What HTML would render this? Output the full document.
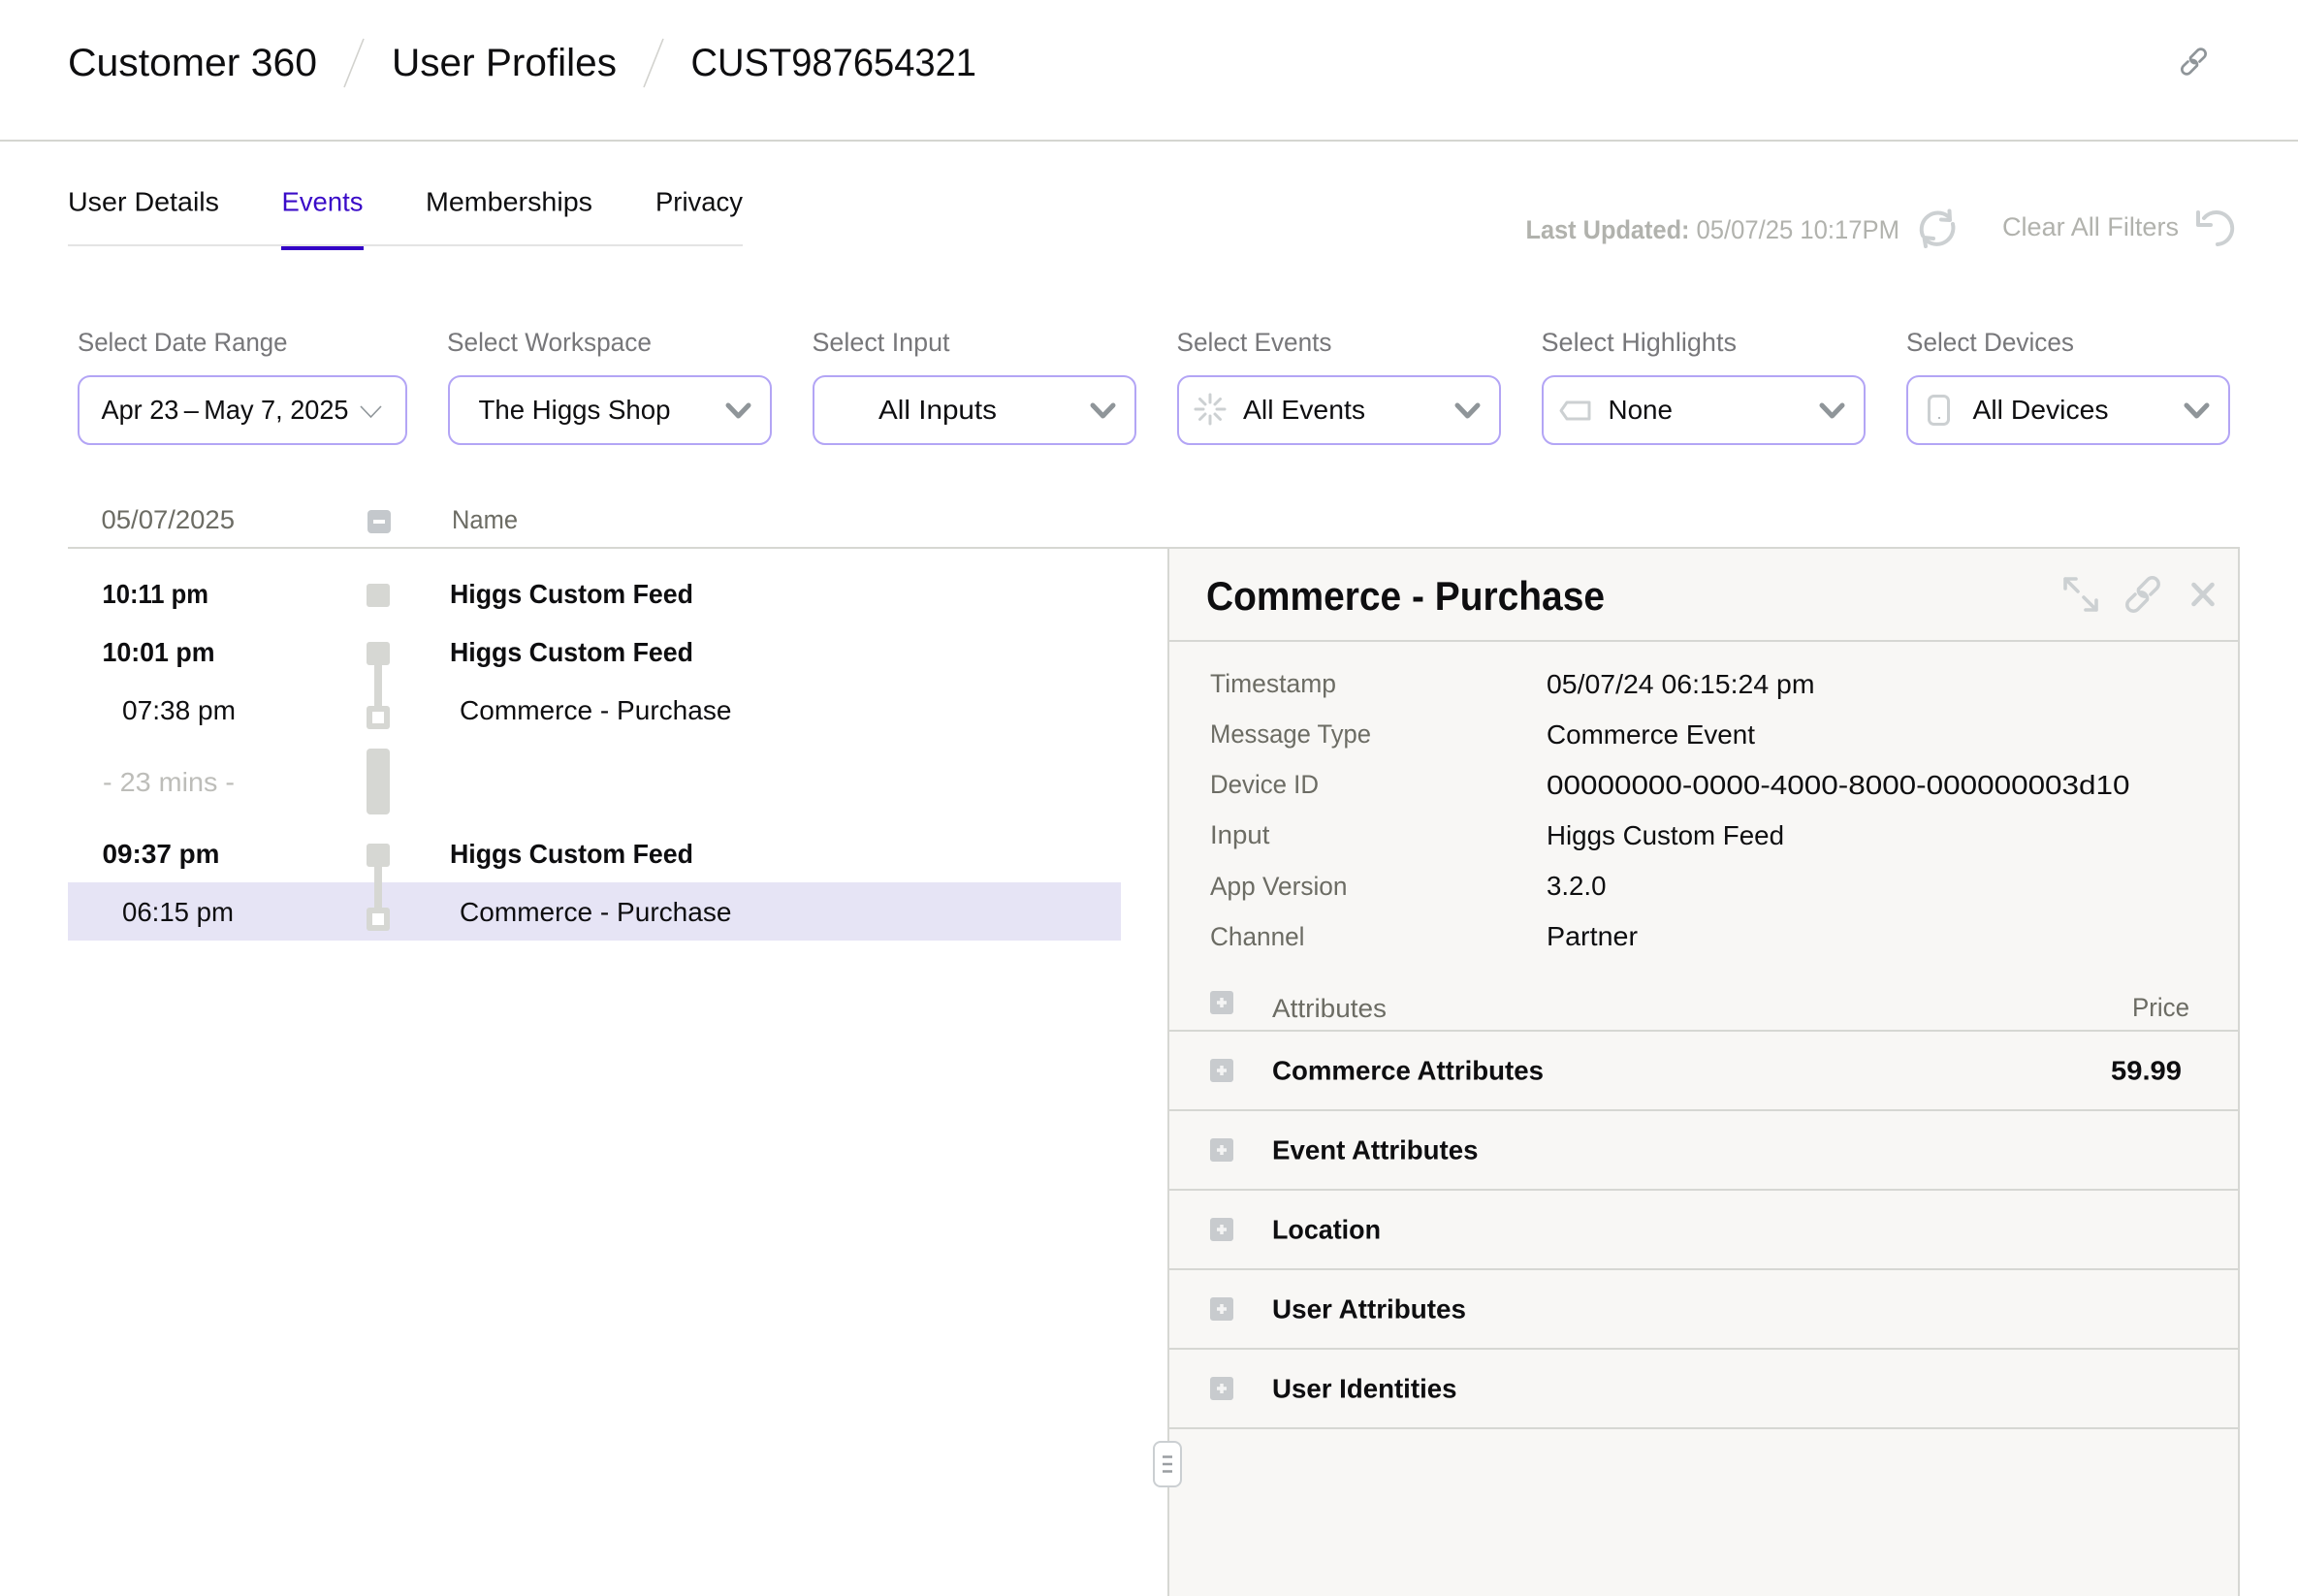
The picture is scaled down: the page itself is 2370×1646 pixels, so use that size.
<!DOCTYPE html>
<html lang="en"><head><meta charset="utf-8"><title>Customer 360</title>
<style>
html,body{margin:0;padding:0;background:#fff;width:2370px;height:1646px;overflow:hidden}
svg{display:block}
text{font-family:"Liberation Sans",Arial,sans-serif;font-size:28px;fill:#0e0e10}
.b{font-weight:700}
.l{fill:#77777a;font-size:27px}
.h{fill:#6c6c64;font-size:27px}
.g{fill:#b1b2ad;font-size:27px}
.ic{fill:none;stroke:#ccd0d2;stroke-linecap:round;stroke-linejoin:round}
.sel{fill:#fff;stroke:#b3a5f5;stroke-width:2}
.chev{fill:none;stroke:#8f9599;stroke-width:5;stroke-linecap:round;stroke-linejoin:round}
.sq{fill:#d6d7d3}
.pl{fill:#c8cbce}
</style></head><body>
<svg xmlns="http://www.w3.org/2000/svg" width="2370" height="1646" viewBox="0 0 2370 1646">
<rect width="2370" height="1646" fill="#fff"/>

<!-- Header -->
<text x="70" y="78" style="font-size:40px" textLength="257" lengthAdjust="spacingAndGlyphs">Customer 360</text>
<text x="404" y="78" style="font-size:40px" textLength="232" lengthAdjust="spacingAndGlyphs">User Profiles</text>
<text x="712.500" y="78" style="font-size:40px" textLength="294.500" lengthAdjust="spacingAndGlyphs">CUST987654321</text>
<line x1="375" y1="40" x2="355" y2="90" stroke="#d2d2ce" stroke-width="1.6"/>
<line x1="684" y1="40" x2="664" y2="90" stroke="#d2d2ce" stroke-width="1.6"/>
<rect x="0" y="144" width="2370" height="2" fill="#d4d5d0"/>
<g transform="translate(2249,50) scale(.75)" fill="none" stroke="#8f9599" stroke-width="3.6" stroke-linecap="round" stroke-linejoin="round"><path d="M21 20A6.500 6.500 0 0 1 13.500 12.500L23.100 2.700A6.500 6.500 0 0 1 32.300 11.900L26 18"/><path d="M15 16A6.500 6.500 0 0 1 22.500 23.500L12.900 33.300A6.500 6.500 0 0 1 3.700 24.100L10 18"/></g>

<!-- Tabs -->
<text x="70" y="217.500" textLength="156" lengthAdjust="spacingAndGlyphs">User Details</text>
<text x="290.500" y="217.500" style="fill:#3a0bc8" textLength="84" lengthAdjust="spacingAndGlyphs">Events</text>
<text x="439" y="217.500" textLength="172" lengthAdjust="spacingAndGlyphs">Memberships</text>
<text x="676" y="217.500" textLength="90" lengthAdjust="spacingAndGlyphs">Privacy</text>
<rect x="70" y="252" width="696" height="2" fill="#e4e4e4"/>
<rect x="290" y="254" width="85" height="4" fill="#3300c6"/>

<!-- Last updated -->
<text x="1573.500" y="246" class="g b" textLength="169" lengthAdjust="spacingAndGlyphs">Last Updated:</text>
<text x="1749.500" y="246" class="g" textLength="209.500" lengthAdjust="spacingAndGlyphs">05/07/25 10:17PM</text>
<g class="ic" stroke-width="4">
<path d="M1983 243 A17 17 0 0 1 2009 223"/>
<path d="M2010.500 217.500 L2011 227 L2002 226.500"/>
<path d="M2014 231 A17 17 0 0 1 1988 249"/>
<path d="M1986 254 L1984.500 245 L1994 246"/>
</g>
<text x="2065" y="243" class="g" textLength="182" lengthAdjust="spacingAndGlyphs">Clear All Filters</text>
<g class="ic" stroke-width="4">
<path d="M2267 219 L2267 232 L2280 232"/>
<path d="M2273 225 A16.500 16.500 0 1 1 2287 252"/>
</g>

<!-- Filters -->
<text x="80" y="362" class="l" textLength="216.500" lengthAdjust="spacingAndGlyphs">Select Date Range</text>
<text x="461" y="362" class="l" textLength="211" lengthAdjust="spacingAndGlyphs">Select Workspace</text>
<text x="837.500" y="362" class="l" textLength="142" lengthAdjust="spacingAndGlyphs">Select Input</text>
<text x="1213.500" y="362" class="l" textLength="160" lengthAdjust="spacingAndGlyphs">Select Events</text>
<text x="1589.500" y="362" class="l" textLength="201.500" lengthAdjust="spacingAndGlyphs">Select Highlights</text>
<text x="1966" y="362" class="l" textLength="173" lengthAdjust="spacingAndGlyphs">Select Devices</text>

<rect class="sel" x="81" y="388" width="338" height="70" rx="12"/>
<rect class="sel" x="463" y="388" width="332" height="70" rx="12"/>
<rect class="sel" x="839" y="388" width="332" height="70" rx="12"/>
<rect class="sel" x="1215" y="388" width="332" height="70" rx="12"/>
<rect class="sel" x="1591" y="388" width="332" height="70" rx="12"/>
<rect class="sel" x="1967" y="388" width="332" height="70" rx="12"/>

<text x="104.500" y="432" textLength="255" lengthAdjust="spacingAndGlyphs">Apr 23&#8201;–&#8201;May 7, 2025</text>
<path d="M372 419 L382.500 430 L393 419" fill="none" stroke="#8f9599" stroke-width="1.600"/>
<text x="493.500" y="432" textLength="198" lengthAdjust="spacingAndGlyphs">The Higgs Shop</text>
<path class="chev" d="M751 418 L761.500 429 L772 418"/>
<text x="906" y="432" textLength="122" lengthAdjust="spacingAndGlyphs">All Inputs</text>
<path class="chev" d="M1127 418 L1137.500 429 L1148 418"/>
<text x="1282" y="432" textLength="126" lengthAdjust="spacingAndGlyphs">All Events</text>
<path class="chev" d="M1503 418 L1513.500 429 L1524 418"/>
<text x="1658.500" y="432" textLength="66.500" lengthAdjust="spacingAndGlyphs">None</text>
<path class="chev" d="M1879 418 L1889.500 429 L1900 418"/>
<text x="2034.500" y="432" textLength="140" lengthAdjust="spacingAndGlyphs">All Devices</text>
<path class="chev" d="M2255 418 L2265.500 429 L2276 418"/>

<g class="ic" stroke-width="3" stroke-linecap="butt">
<path d="M1248 407v8M1248 429v8M1233 422h8M1255 422h8M1237.500 411.500l5.500 5.500M1253 427l5.500 5.500M1237.500 432.500l5.500-5.500M1253 417l5.500-5.500"/>
</g>
<path d="M1616 415 H1639 V432 H1616 L1610 423.500 Z" fill="none" stroke="#ccd0d2" stroke-width="3" stroke-linejoin="round"/>
<rect x="1989.500" y="408.500" width="20" height="29" rx="5" fill="none" stroke="#ccd0d2" stroke-width="3"/>
<rect x="1999" y="430" width="2" height="2" fill="#b8bcbf"/>

<!-- Timeline header -->
<text x="104.500" y="545" class="h" textLength="137.500" lengthAdjust="spacingAndGlyphs">05/07/2025</text>
<rect x="379" y="526" width="24" height="24" rx="4" fill="#c4c8cc"/>
<rect x="385" y="536" width="12" height="4" fill="#fff"/>
<text x="466" y="545" class="h" textLength="68" lengthAdjust="spacingAndGlyphs">Name</text>
<rect x="70" y="564" width="1135" height="2" fill="#d6d7d2"/>

<!-- Highlight -->
<rect x="70" y="910" width="1086" height="60" fill="#e6e4f5"/>

<!-- Timeline markers -->
<rect class="sq" x="378" y="602" width="24" height="24" rx="3"/>
<rect class="sq" x="378" y="662" width="24" height="24" rx="3"/>
<rect class="sq" x="386" y="684" width="8" height="46"/>
<rect class="sq" x="378" y="728" width="24" height="24" rx="3"/>
<rect x="384" y="734" width="12" height="12" fill="#fff"/>
<rect class="sq" x="378" y="772" width="24" height="68" rx="4"/>
<rect class="sq" x="378" y="870" width="24" height="24" rx="3"/>
<rect class="sq" x="386" y="892" width="8" height="46"/>
<rect class="sq" x="378" y="936" width="24" height="24" rx="3"/>
<rect x="384" y="942" width="12" height="12" fill="#fff"/>

<!-- Timeline rows -->
<text x="105.500" y="622" class="b" textLength="109.500" lengthAdjust="spacingAndGlyphs">10:11 pm</text>
<text x="464" y="622" class="b" textLength="251" lengthAdjust="spacingAndGlyphs">Higgs Custom Feed</text>
<text x="105.500" y="682" class="b" textLength="116" lengthAdjust="spacingAndGlyphs">10:01 pm</text>
<text x="464" y="682" class="b" textLength="251" lengthAdjust="spacingAndGlyphs">Higgs Custom Feed</text>
<text x="126" y="742" textLength="117" lengthAdjust="spacingAndGlyphs">07:38 pm</text>
<text x="474" y="742" textLength="280.500" lengthAdjust="spacingAndGlyphs">Commerce - Purchase</text>
<text x="106" y="816" style="fill:#bdbdb9" textLength="136" lengthAdjust="spacingAndGlyphs">- 23 mins -</text>
<text x="105.500" y="890" class="b" textLength="121" lengthAdjust="spacingAndGlyphs">09:37 pm</text>
<text x="464" y="890" class="b" textLength="251" lengthAdjust="spacingAndGlyphs">Higgs Custom Feed</text>
<text x="126" y="950" textLength="115" lengthAdjust="spacingAndGlyphs">06:15 pm</text>
<text x="474" y="950" textLength="280.500" lengthAdjust="spacingAndGlyphs">Commerce - Purchase</text>

<!-- Panel -->
<rect x="1205" y="565" width="1104" height="1090" fill="#f8f7f5" stroke="#d6d7d3" stroke-width="2"/>
<text x="1244" y="629" class="b" style="font-size:42px" textLength="411" lengthAdjust="spacingAndGlyphs">Commerce - Purchase</text>
<rect x="1205" y="660" width="1104" height="2" fill="#d6d7d3"/>

<g class="ic" stroke-width="3.600">
<path d="M2130 607 V597 H2141 M2130 597 L2143 610"/>
<path d="M2162 619 V629 H2151 M2162 629 L2149 616"/>
<path d="M2262.500 603 L2281.500 623 M2281.500 603 L2262.500 623" stroke-width="4.600"/>
</g>
<g transform="translate(2192,595)" class="ic" stroke-width="3.500"><path d="M21 20A6.500 6.500 0 0 1 13.500 12.500L23.100 2.700A6.500 6.500 0 0 1 32.300 11.900L26 18"/><path d="M15 16A6.500 6.500 0 0 1 22.500 23.500L12.900 33.300A6.500 6.500 0 0 1 3.700 24.100L10 18"/></g>

<text x="1248" y="714" class="h" textLength="130" lengthAdjust="spacingAndGlyphs">Timestamp</text>
<text x="1248" y="766" class="h" textLength="166" lengthAdjust="spacingAndGlyphs">Message Type</text>
<text x="1248" y="818" class="h" textLength="112" lengthAdjust="spacingAndGlyphs">Device ID</text>
<text x="1248" y="870" class="h" textLength="61.500" lengthAdjust="spacingAndGlyphs">Input</text>
<text x="1248" y="923" class="h" textLength="141.500" lengthAdjust="spacingAndGlyphs">App Version</text>
<text x="1248" y="975" class="h" textLength="97.500" lengthAdjust="spacingAndGlyphs">Channel</text>

<text x="1595" y="715" textLength="276.500" lengthAdjust="spacingAndGlyphs">05/07/24 06:15:24 pm</text>
<text x="1595" y="767" textLength="215" lengthAdjust="spacingAndGlyphs">Commerce Event</text>
<text x="1595" y="819" textLength="601.500" lengthAdjust="spacingAndGlyphs">00000000-0000-4000-8000-000000003d10</text>
<text x="1595" y="871" textLength="245" lengthAdjust="spacingAndGlyphs">Higgs Custom Feed</text>
<text x="1595" y="923" textLength="61.500" lengthAdjust="spacingAndGlyphs">3.2.0</text>
<text x="1595" y="975" textLength="94" lengthAdjust="spacingAndGlyphs">Partner</text>

<!-- Attributes -->
<g>
<rect class="pl" x="1248" y="1022" width="24" height="24" rx="3"/><path d="M1260 1029v10M1255 1034h10" stroke="#f4f4f4" stroke-width="3.500"/>
<rect class="pl" x="1248" y="1092" width="24" height="24" rx="3"/><path d="M1260 1099v10M1255 1104h10" stroke="#f4f4f4" stroke-width="3.500"/>
<rect class="pl" x="1248" y="1174" width="24" height="24" rx="3"/><path d="M1260 1181v10M1255 1186h10" stroke="#f4f4f4" stroke-width="3.500"/>
<rect class="pl" x="1248" y="1256" width="24" height="24" rx="3"/><path d="M1260 1263v10M1255 1268h10" stroke="#f4f4f4" stroke-width="3.500"/>
<rect class="pl" x="1248" y="1338" width="24" height="24" rx="3"/><path d="M1260 1345v10M1255 1350h10" stroke="#f4f4f4" stroke-width="3.500"/>
<rect class="pl" x="1248" y="1420" width="24" height="24" rx="3"/><path d="M1260 1427v10M1255 1432h10" stroke="#f4f4f4" stroke-width="3.500"/>
</g>
<text x="1312" y="1049" class="h" textLength="118" lengthAdjust="spacingAndGlyphs">Attributes</text>
<text x="2199" y="1048" class="h" textLength="59" lengthAdjust="spacingAndGlyphs">Price</text>
<rect x="1205" y="1062" width="1104" height="2" fill="#d6d7d3"/>
<text x="1312" y="1113.500" class="b" textLength="280" lengthAdjust="spacingAndGlyphs">Commerce Attributes</text>
<text x="2177" y="1113.500" class="b" textLength="73" lengthAdjust="spacingAndGlyphs">59.99</text>
<rect x="1205" y="1144" width="1104" height="2" fill="#d6d7d3"/>
<text x="1312" y="1195.500" class="b" textLength="212.500" lengthAdjust="spacingAndGlyphs">Event Attributes</text>
<rect x="1205" y="1226" width="1104" height="2" fill="#d6d7d3"/>
<text x="1312" y="1277.500" class="b" textLength="112" lengthAdjust="spacingAndGlyphs">Location</text>
<rect x="1205" y="1308" width="1104" height="2" fill="#d6d7d3"/>
<text x="1312" y="1359.500" class="b" textLength="200" lengthAdjust="spacingAndGlyphs">User Attributes</text>
<rect x="1205" y="1390" width="1104" height="2" fill="#d6d7d3"/>
<text x="1312" y="1441.500" class="b" textLength="190.500" lengthAdjust="spacingAndGlyphs">User Identities</text>
<rect x="1205" y="1472" width="1104" height="2" fill="#d6d7d3"/>

<!-- Handle -->
<rect x="1190" y="1487" width="28" height="46" rx="7" fill="#fff" stroke="#cbcfd2" stroke-width="2"/>
<path d="M1199 1502.500h10M1199 1510h10M1199 1517.500h10" stroke="#9a9ea2" stroke-width="2.600"/>
</svg>
</body></html>
